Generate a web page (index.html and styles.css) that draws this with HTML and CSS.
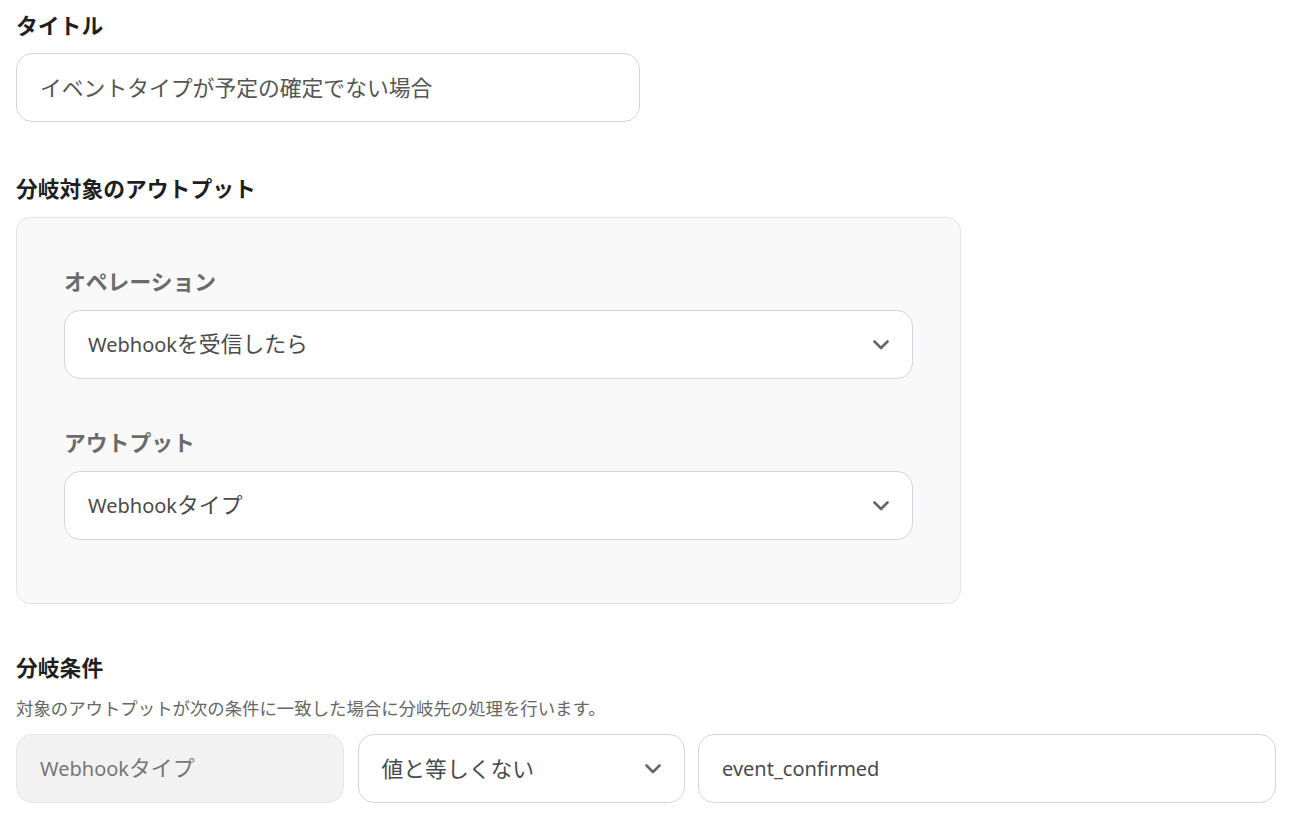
FILE: index.html
```html
<!DOCTYPE html>
<html lang="ja">
<head>
<meta charset="utf-8">
<link rel="stylesheet" href="styles.css">
</head>
<body>
<div class="page">
  <div class="section first">
    <div class="label">タイトル</div>
    <div class="field title-field"><span class="ja">イベントタイプが予定の確定でない場合</span></div>
  </div>

  <div class="section second">
    <div class="label">分岐対象のアウトプット</div>
    <div class="panel">
      <div class="sublabel">オペレーション</div>
      <div class="field select">
        <span>Webhook<span class="ja">を受信したら</span></span>
        <svg class="chev" width="16" height="10" viewBox="0 0 16 10"><polyline points="1.5,1.5 8,8 14.5,1.5" fill="none" stroke="#666" stroke-width="2.6" stroke-linecap="round" stroke-linejoin="round"/></svg>
      </div>
      <div class="sublabel later">アウトプット</div>
      <div class="field select">
        <span>Webhook<span class="ja">タイプ</span></span>
        <svg class="chev" width="16" height="10" viewBox="0 0 16 10"><polyline points="1.5,1.5 8,8 14.5,1.5" fill="none" stroke="#666" stroke-width="2.6" stroke-linecap="round" stroke-linejoin="round"/></svg>
      </div>
    </div>
  </div>

  <div class="section third">
    <div class="label">分岐条件</div>
    <div class="desc">対象のアウトプットが次の条件に一致した場合に分岐先の処理を行います。</div>
    <div class="cond-row">
      <div class="field disabled"><span>Webhook<span class="ja">タイプ</span></span></div>
      <div class="field select">
        <span class="ja">値と等しくない</span>
        <svg class="chev" width="16" height="10" viewBox="0 0 16 10"><polyline points="1.5,1.5 8,8 14.5,1.5" fill="none" stroke="#666" stroke-width="2.6" stroke-linecap="round" stroke-linejoin="round"/></svg>
      </div>
      <div class="field">event_confirmed</div>
    </div>
  </div>
</div>
</body>
</html>
```

FILE: styles.css
```css
* { box-sizing: border-box; }
html, body { margin: 0; padding: 0; background: #fff; }
body {
  font-family: "Noto Sans", "Noto Sans CJK JP", sans-serif;
  color: #222;
}
.page {
  padding: 11px 15px 0 16px;
}
.section.second { margin-top: 52px; }
.section.third { margin-top: 49px; }
.label {
  font-size: 21.8px;
  font-weight: 700;
  line-height: 30px;
  color: #1f1f1f;
  margin-bottom: 13px;
}
.section.first .label { margin-bottom: 12px; }
.ja { font-size: 1.09em; line-height: 1; }
.field {
  height: 69px;
  border: 1px solid #d3d6dc;
  border-radius: 16px;
  background: #fff;
  display: flex;
  align-items: center;
  padding: 0 23px;
  font-size: 20px;
  color: #4a4a4a;
  white-space: nowrap;
}
.title-field {
  width: 624px;
  color: #555;
}
.panel {
  width: 945px;
  background: #f9f9f9;
  border: 1px solid #e4e4e4;
  border-radius: 14px;
  padding: 49px 47px 63px;
}
.sublabel {
  font-size: 21.8px;
  font-weight: 700;
  line-height: 30px;
  color: #6b6b6b;
  margin-bottom: 13px;
}
.sublabel.later { margin-top: 49px; }
.select {
  justify-content: space-between;
  padding-right: 23px;
}
.chev { flex: none; }
.desc {
  font-size: 17.4px;
  line-height: 24px;
  color: #666;
  margin-bottom: 14px;
}
.cond-row {
  display: grid;
  grid-template-columns: 328fr 327fr 578fr;
  column-gap: 13.5px;
}
.disabled {
  background: #f2f2f2;
  border-color: #e6e6e6;
  color: #777;
}
```
